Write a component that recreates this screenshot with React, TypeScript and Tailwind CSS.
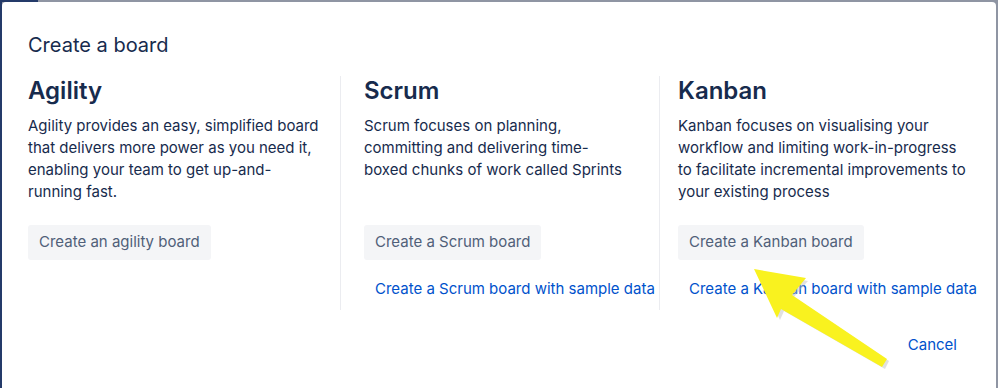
import React from "react";

/* ── Board types ─────────────────────────────── */
const boards = [
  {
    name: "Agility",
    lines: [
      "Agility provides an easy, simplified board",
      "that delivers more power as you need it,",
      "enabling your team to get up-and-",
      "running fast.",
    ],
    button: "Create an agility board",
    sample: null as string | null,
  },
  {
    name: "Scrum",
    lines: [
      "Scrum focuses on planning,",
      "committing and delivering time-",
      "boxed chunks of work called Sprints",
    ],
    button: "Create a Scrum board",
    sample: "Create a Scrum board with sample data",
  },
  {
    name: "Kanban",
    lines: [
      "Kanban focuses on visualising your",
      "workflow and limiting work-in-progress",
      "to facilitate incremental improvements to",
      "your existing process",
    ],
    button: "Create a Kanban board",
    sample: "Create a Kanban board with sample data",
  },
];

const colClass = [
  "w-[312px] pr-5",
  "w-[319px] border-l border-[#ebecf0] pl-[23px] pr-2",
  "flex-1 border-l border-[#ebecf0] pl-[18px]",
];

/* ── Annotation arrow ───────────────────────── */
const Arrow = () => (
  <svg
    className="absolute left-0 top-0 pointer-events-none"
    width="998"
    height="388"
    viewBox="0 0 998 388"
  >
    <polygon
      points="755,272 806,281 792,297 887,361 883,369 782,311 778,320"
      fill="#bdbdbd"
      opacity="0.45"
    />
    <polygon
      points="752,269 804,278 790,295 885,359 880,367 779,309 775,318"
      fill="#f9f21f"
    />
  </svg>
);

export default function App() {
  return (
    <div
      className="relative w-[998px] h-[388px] overflow-hidden bg-[#8f95a3] pt-[2px] pr-[2px] border-l-2 border-[#243a69]"
      style={{ fontFamily: 'Inter, "Liberation Sans", Arial, sans-serif' }}
    >
      <div className="absolute left-0 top-0 w-[36px] h-[2px] bg-[#243a69]" />
      <div className="h-full bg-white rounded-t-[4px] pl-[26px] pt-[28px]">
        <h1 className="text-[20px] leading-[30px] text-[#172b4d]">Create a board</h1>

        <div className="flex mt-[16px]">
          {boards.map((b, i) => (
            <div key={b.name} className={`${colClass[i]} h-[234px]`}>
              <h2 className="text-[24px] leading-[30px] font-semibold text-[#172b4d]">{b.name}</h2>
              <p className="mt-[9px] h-[88px] text-[15px] leading-[22px] text-[#172b4d]">
                {b.lines.map((l) => (
                  <span key={l} className="block whitespace-nowrap">{l}</span>
                ))}
              </p>
              <button className="mt-[22px] h-[35px] px-[11px] rounded-[3px] bg-[#f4f5f7] text-[15px] text-[#505f79]">
                {b.button}
              </button>
              {b.sample && (
                <a className="block mt-[18px] pl-[11px] text-[15px] leading-[22px] text-[#0052cc] whitespace-nowrap">
                  {b.sample}
                </a>
              )}
            </div>
          ))}
        </div>

        <div className="flex justify-end pr-[39px] mt-[24px]">
          <a className="text-[15px] leading-[22px] text-[#0052cc]">Cancel</a>
        </div>
      </div>
      <Arrow />
    </div>
  );
}
